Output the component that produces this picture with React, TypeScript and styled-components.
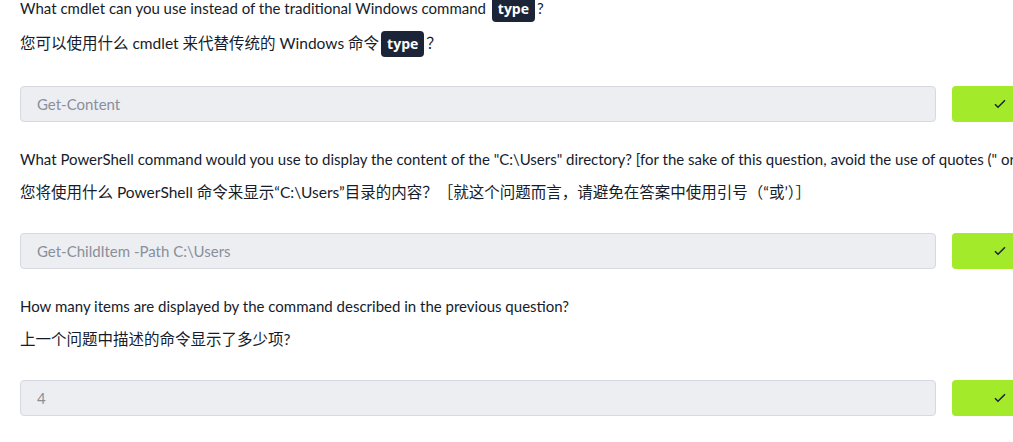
import React from "react";
import styled, { createGlobalStyle } from "styled-components";

const Global = createGlobalStyle`
  html, body { margin: 0; padding: 0; background: #ffffff; overflow: hidden; }
  body { font-family: Lato, "Noto Sans CJK SC", sans-serif; }
`;

const Page = styled.div`
  width: 1068px;
  box-sizing: border-box;
  padding: 0 20px;
  margin-top: -4px;
  display: flex;
  flex-direction: column;
  gap: 25px;
`;

const Section = styled.section`
  display: flex;
  flex-direction: column;
`;

const Line = styled.p<{ $cn?: boolean }>`
  margin: 0;
  font-size: ${(p) => (p.$cn ? "15.5px" : "15px")};
  line-height: 24px;
  color: #151c2b;
  white-space: nowrap;
  font-family: Lato, "Noto Sans CJK SC", sans-serif;
  margin-bottom: ${(p) => (p.$cn ? "29px" : "9px")};
`;

const Code = styled.code`
  display: inline-block;
  background: #1c2538;
  color: #ffffff;
  font-family: "Open Sans", sans-serif;
  font-weight: 700;
  font-size: 14px;
  line-height: 20px;
  padding: 3px 6px;
  border-radius: 4px;
  margin: 0 2px;
`;

const Row = styled.div`
  display: flex;
  gap: 16px;
  align-items: stretch;
`;

const Input = styled.input`
  flex: 1;
  height: 36px;
  box-sizing: border-box;
  background: #eceef2;
  border: 1px solid #d6d9df;
  border-radius: 4px;
  padding: 0 16px;
  font-family: Lato, sans-serif;
  font-size: 15px;
  color: #8a8f9a;
  outline: none;
`;

const Submit = styled.button`
  width: 96px;
  height: 36px;
  background: #a3ea2a;
  border: none;
  border-radius: 4px;
  display: flex;
  align-items: center;
  justify-content: center;
  padding: 0;
`;

const Check = () => (
  <svg width="12" height="10" viewBox="0 0 12 10" fill="none">
    <path d="M1 5.2 L4 8.2 L11 1.2" stroke="#1c2538" strokeWidth="1.6" />
  </svg>
);

const Answer = ({ value }: { value: string }) => (
  <Row>
    <Input readOnly value={value} />
    <Submit aria-label="submit">
      <Check />
    </Submit>
  </Row>
);

export default function App() {
  return (
    <>
      <Global />
      <Page>
        <Section>
          <Line>
            What cmdlet can you use instead of the traditional Windows command <Code>type</Code>?
          </Line>
          <Line $cn>
            您可以使用什么 cmdlet 来代替传统的 Windows 命令<Code>type</Code>？
          </Line>
          <Answer value="Get-Content" />
        </Section>
        <Section>
          <Line>
            What PowerShell command would you use to display the content of the "C:\Users" directory? [for the sake of this question, avoid the use of quotes (" or ') in your answer]
          </Line>
          <Line $cn>
            您将使用什么 PowerShell 命令来显示“C:\Users”目录的内容？［就这个问题而言，请避免在答案中使用引号（“或’）］
          </Line>
          <Answer value="Get-ChildItem -Path C:\Users" />
        </Section>
        <Section>
          <Line>How many items are displayed by the command described in the previous question?</Line>
          <Line $cn>上一个问题中描述的命令显示了多少项?</Line>
          <Answer value="4" />
        </Section>
      </Page>
    </>
  );
}
